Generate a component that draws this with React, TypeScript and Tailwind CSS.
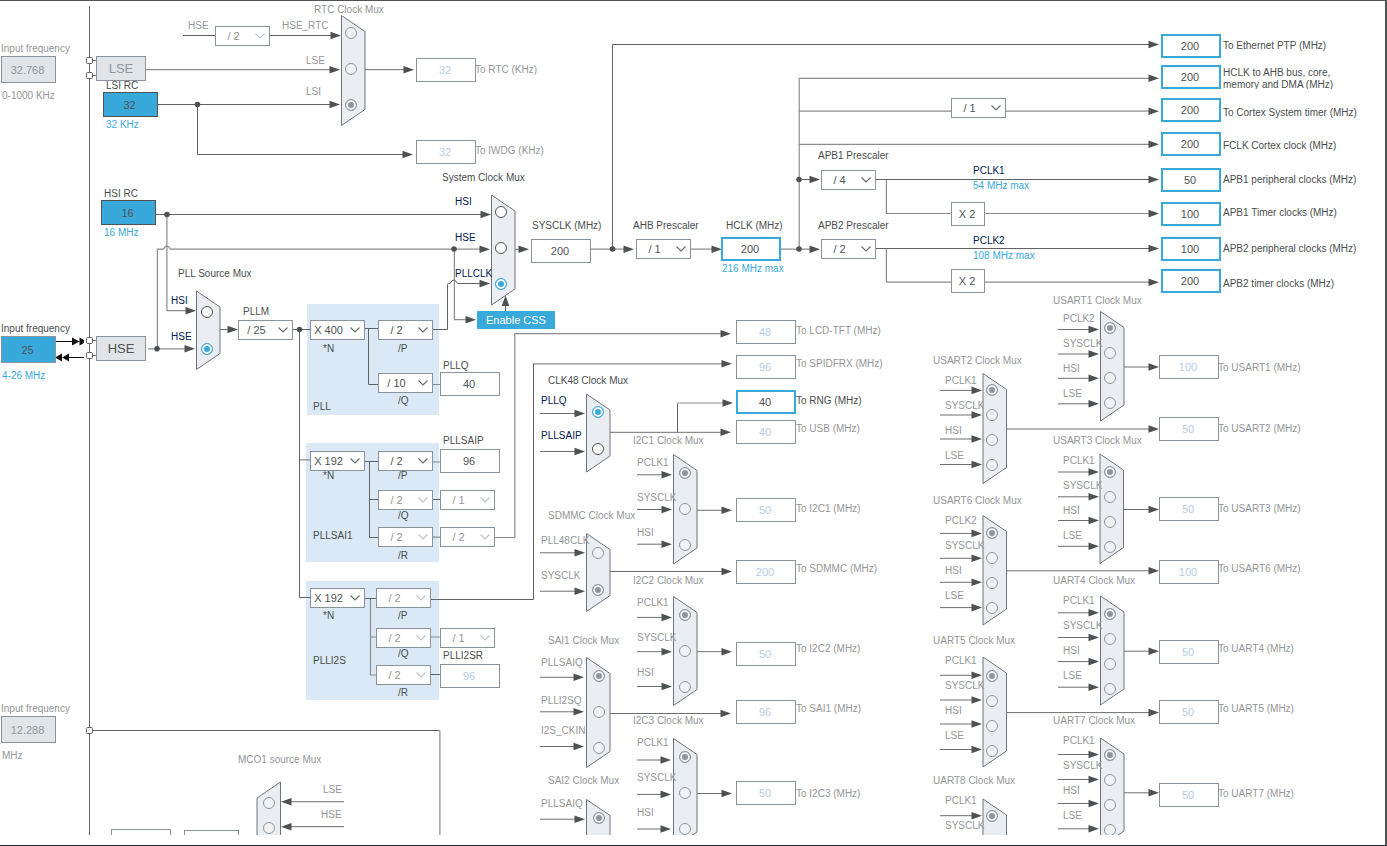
import { useId, useState } from "react";
import clsx from "clsx";

type Tone = "on" | "off" | "navy" | "blue";

const tones: Record<Tone, string> = {
  on: "text-[#4a4d4e]",
  off: "text-[#949697]",
  navy: "text-[#002052]",
  blue: "text-[#39a9dc]",
};

// label, label x, label y, radio y, wire y
type MuxInput = [string, number, number, number, number?];

type MuxData = {
  title: string;
  titleAt: [number, number];
  x: number;
  top: number;
  bottom: number;
  radioX: number;
  picked: number;
  active?: boolean;
  flipped?: boolean;
  wire?: [number, number];
  out?: [number, number];
  inputs: MuxInput[];
};

const muxes: MuxData[] = [
  {
    title: "RTC Clock Mux", titleAt: [314, 10], x: 341.5, top: 15.5, bottom: 125.5, radioX: 351, picked: 2, out: [69.7, 414],
    inputs: [["HSE_RTC", 282, 26, 33], ["LSE", 306, 61, 69], ["LSI", 306, 92, 105]],
  },
  {
    title: "System Clock Mux", titleAt: [442, 178], x: 491.5, top: 195, bottom: 305, radioX: 501, picked: 2, active: true, out: [249.3, 529],
    inputs: [["HSI", 455, 202, 212], ["HSE", 455, 238, 248], ["PLLCLK", 455, 274, 284]],
  },
  {
    title: "PLL Source Mux", titleAt: [178, 274], x: 196.5, top: 291, bottom: 369.5, radioX: 207, picked: 1, active: true, out: [329.5, 238],
    inputs: [["HSI", 171, 301, 312], ["HSE", 171, 337, 349]],
  },
  {
    title: "CLK48 Clock Mux", titleAt: [548, 381], x: 586.5, top: 394, bottom: 472, radioX: 598, picked: 0, active: true, wire: [540, 585], out: [432.3, 731],
    inputs: [["PLLQ", 541, 401, 412, 413.5], ["PLLSAIP", 541, 436, 449, 451.5]],
  },
  {
    title: "SDMMC Clock Mux", titleAt: [548, 516], x: 586.5, top: 533.5, bottom: 611.5, radioX: 598, picked: 1, wire: [540, 585], out: [571.5, 732],
    inputs: [["PLL48CLK", 541, 541, 553, 552.8], ["SYSCLK", 541, 576, 590, 591.2]],
  },
  {
    title: "SAI1 Clock Mux", titleAt: [548, 641], x: 586.5, top: 657.5, bottom: 767.5, radioX: 599, picked: 0, wire: [540, 584], out: [713.5, 731],
    inputs: [["PLLSAIQ", 541, 663, 676, 677.3], ["PLLI2SQ", 541, 701, 712, 711.8], ["I2S_CKIN", 541, 731, 748, 746.5]],
  },
  {
    title: "SAI2 Clock Mux", titleAt: [548, 781], x: 586.5, top: 799.5, bottom: 909.5, radioX: 599, picked: 0, wire: [540, 585],
    inputs: [["PLLSAIQ", 541, 804, 818, 819.2]],
  },
  {
    title: "I2C1 Clock Mux", titleAt: [633, 441], x: 673.5, top: 454.5, bottom: 564, radioX: 685, picked: 0, wire: [637, 672], out: [510.3, 732],
    inputs: [["PCLK1", 637, 463, 473, 474.8], ["SYSCLK", 637, 498, 509, 509.5], ["HSI", 637, 533, 545, 544.2]],
  },
  {
    title: "I2C2 Clock Mux", titleAt: [633, 581], x: 673.5, top: 596.5, bottom: 705.5, radioX: 685, picked: 0, wire: [637, 672], out: [651.7, 732],
    inputs: [["PCLK1", 637, 603, 615, 617.4], ["SYSCLK", 637, 638, 651, 651.7], ["HSI", 637, 673, 687, 686.5]],
  },
  {
    title: "I2C3 Clock Mux", titleAt: [633, 721], x: 673.5, top: 738.5, bottom: 848, radioX: 685, picked: 0, wire: [637, 671], out: [793.5, 732],
    inputs: [["PCLK1", 637, 743, 757, 760], ["SYSCLK", 637, 778, 793, 794.4], ["HSI", 637, 813, 829, 829]],
  },
  {
    title: "USART1 Clock Mux", titleAt: [1053, 301], x: 1100.5, top: 311.5, bottom: 421, radioX: 1110, picked: 0, wire: [1058, 1099], out: [367, 1159],
    inputs: [["PCLK2", 1063, 319, 328, 329.5], ["SYSCLK", 1063, 344, 353, 354], ["HSI", 1063, 369, 378, 378.3], ["LSE", 1063, 394, 403, 403.8]],
  },
  {
    title: "USART3 Clock Mux", titleAt: [1053, 441], x: 1100, top: 454, bottom: 563.5, radioX: 1110, picked: 0, wire: [1058, 1099], out: [509.5, 1159],
    inputs: [["PCLK1", 1063, 461, 472, 472], ["SYSCLK", 1063, 486, 497, 496.8], ["HSI", 1063, 511, 522, 520.5], ["LSE", 1063, 536, 547, 546.3]],
  },
  {
    title: "UART4 Clock Mux", titleAt: [1053, 581], x: 1100.5, top: 596, bottom: 705, radioX: 1110, picked: 0, wire: [1058, 1099], out: [651.2, 1159],
    inputs: [["PCLK1", 1063, 601, 614, 612.8], ["SYSCLK", 1063, 626, 639, 637.5], ["HSI", 1063, 651, 664, 661.6], ["LSE", 1063, 676, 689, 687.2]],
  },
  {
    title: "UART7 Clock Mux", titleAt: [1053, 721], x: 1100.5, top: 738, bottom: 847, radioX: 1110, picked: 0, wire: [1058, 1099], out: [792.8, 1159],
    inputs: [["PCLK1", 1063, 741, 755, 754.5], ["SYSCLK", 1063, 766, 780, 779.5], ["HSI", 1063, 791, 805, 803.5], ["LSE", 1063, 816, 830, 828.8]],
  },
  {
    title: "USART2 Clock Mux", titleAt: [933, 361], x: 983, top: 373.5, bottom: 483.5, radioX: 992, picked: 0, wire: [940, 982], out: [429, 1159],
    inputs: [["PCLK1", 945, 381, 390, 390.4], ["SYSCLK", 945, 406, 415, 415], ["HSI", 945, 431, 440, 439], ["LSE", 945, 456, 465, 464.5]],
  },
  {
    title: "USART6 Clock Mux", titleAt: [933, 501], x: 983, top: 515.5, bottom: 625, radioX: 992, picked: 0, wire: [940, 982], out: [570.8, 1159],
    inputs: [["PCLK2", 945, 521, 533, 533.4], ["SYSCLK", 945, 546, 558, 558.3], ["HSI", 945, 571, 583, 582.3], ["LSE", 945, 596, 608, 607.6]],
  },
  {
    title: "UART5 Clock Mux", titleAt: [933, 641], x: 983, top: 657, bottom: 767, radioX: 992, picked: 0, wire: [940, 982], out: [712.6, 1159],
    inputs: [["PCLK1", 945, 661, 676, 675.3], ["SYSCLK", 945, 686, 701, 700], ["HSI", 945, 711, 726, 724], ["LSE", 945, 736, 751, 749.5]],
  },
  {
    title: "UART8 Clock Mux", titleAt: [933, 781], x: 983, top: 799, bottom: 909, radioX: 992, picked: 0, wire: [940, 982],
    inputs: [["PCLK1", 945, 801, 816, 815.7], ["SYSCLK", 945, 826, 841, 841]],
  },
  {
    title: "MCO1 source Mux", titleAt: [238, 760], x: 257, top: 782, bottom: 912, radioX: 269, picked: -1, flipped: true,
    inputs: [["LSE", 323, 790, 803], ["HSE", 321, 815, 828]],
  },
];

// value, x, y, label, label x, label y, state
type BoxData = [string, number, number, string, number, number, "plain" | "live" | "off"];

const boxes: BoxData[] = [
  ["32", 416, 58, "To RTC (KHz)", 475, 70, "off"],
  ["32", 416, 140, "To IWDG (KHz)", 475, 151, "off"],
  ["200", 531, 239, "SYSCLK (MHz)", 532, 226, "plain"],
  ["200", 721, 237, "HCLK (MHz)", 726, 226, "live"],
  ["40", 440, 372, "PLLQ", 443, 366, "plain"],
  ["96", 440, 449, "PLLSAIP", 443, 441, "plain"],
  ["96", 440, 664, "PLLI2SR", 443, 656, "off"],
  ["200", 1161, 34, "To Ethernet PTP (MHz)", 1223, 46, "live"],
  ["200", 1161, 65, "HCLK to AHB bus, core, memory and DMA (MHz)", 1223, 73, "live"],
  ["200", 1161, 98, "To Cortex System timer (MHz)", 1223, 113, "live"],
  ["200", 1161, 132, "FCLK Cortex clock (MHz)", 1223, 146, "live"],
  ["50", 1161, 168, "APB1 peripheral clocks (MHz)", 1223, 180, "live"],
  ["100", 1161, 202, "APB1 Timer clocks (MHz)", 1223, 213, "live"],
  ["100", 1161, 237, "APB2 peripheral clocks (MHz)", 1223, 249, "live"],
  ["200", 1161, 269, "APB2 timer clocks (MHz)", 1223, 284, "live"],
  ["48", 736, 320, "To LCD-TFT (MHz)", 796, 331, "off"],
  ["96", 736, 355, "To SPIDFRX (MHz)", 796, 364, "off"],
  ["40", 736, 390, "To RNG (MHz)", 796, 401, "live"],
  ["40", 736, 420, "To USB (MHz)", 796, 429, "off"],
  ["50", 736, 498, "To I2C1 (MHz)", 796, 509, "off"],
  ["200", 736, 560, "To SDMMC (MHz)", 796, 569, "off"],
  ["50", 736, 642, "To I2C2 (MHz)", 796, 649, "off"],
  ["96", 736, 700, "To SAI1 (MHz)", 796, 709, "off"],
  ["50", 736, 781, "To I2C3 (MHz)", 796, 794, "off"],
  ["100", 1159, 355, "To USART1 (MHz)", 1218, 368, "off"],
  ["50", 1159, 417, "To USART2 (MHz)", 1218, 429, "off"],
  ["50", 1159, 497, "To USART3 (MHz)", 1218, 509, "off"],
  ["100", 1159, 560, "To USART6 (MHz)", 1218, 569, "off"],
  ["50", 1159, 640, "To UART4 (MHz)", 1218, 649, "off"],
  ["50", 1159, 700, "To UART5 (MHz)", 1218, 709, "off"],
  ["50", 1159, 783, "To UART7 (MHz)", 1218, 794, "off"],
];

// name, value, x, y, disabled
const dividers: [string, string, number, number, boolean?][] = [
  ["RTC HSE divider", "/ 2", 215, 26, true],
  ["Cortex timer prescaler", "/ 1", 951, 98],
  ["AHB Prescaler", "/ 1", 636, 239],
  ["APB1 Prescaler", "/ 4", 821, 170],
  ["APB2 Prescaler", "/ 2", 821, 239],
  ["PLLM", "/ 25", 238, 320],
  ["PLL N", "X 400", 310, 320],
  ["PLL P", "/ 2", 378, 320],
  ["PLL Q", "/ 10", 378, 373],
  ["PLLSAI1 N", "X 192", 310, 451],
  ["PLLSAI1 P", "/ 2", 378, 451],
  ["PLLSAI1 Q", "/ 2", 378, 490, true],
  ["PLLSAI1 Q divider", "/ 1", 440, 490, true],
  ["PLLSAI1 R", "/ 2", 378, 527, true],
  ["PLLSAI1 R divider", "/ 2", 440, 527, true],
  ["PLLI2S N", "X 192", 310, 588],
  ["PLLI2S P", "/ 2", 376, 588, true],
  ["PLLI2S Q", "/ 2", 376, 628, true],
  ["PLLI2S Q divider", "/ 1", 440, 628, true],
  ["PLLI2S R", "/ 2", 376, 665, true],
  ["MCO1 prescaler", "/ 1", 184, 830, true],
];

const notes: [string, number, number, Tone][] = [
  ["HSE", 188, 26, "off"],
  ["216 MHz max", 722, 269, "blue"],
  ["54 MHz max", 973, 186, "blue"],
  ["108 MHz max", 973, 256, "blue"],
  ["PCLK1", 973, 171, "navy"],
  ["PCLK2", 973, 241, "navy"],
  ["PLLM", 243, 312, "on"],
  ["AHB Prescaler", 633, 226, "on"],
  ["APB1 Prescaler", 818, 156, "on"],
  ["APB2 Prescaler", 818, 226, "on"],
  ["*N", 323, 349, "on"],
  ["/P", 398, 349, "on"],
  ["/Q", 398, 401, "on"],
  ["PLL", 313, 407, "on"],
  ["*N", 323, 476, "on"],
  ["/P", 398, 476, "on"],
  ["/Q", 398, 516, "on"],
  ["/R", 398, 556, "on"],
  ["PLLSAI1", 313, 536, "on"],
  ["*N", 323, 616, "on"],
  ["/P", 398, 616, "on"],
  ["/Q", 398, 654, "on"],
  ["/R", 398, 693, "on"],
  ["PLLI2S", 313, 661, "on"],
];

const darkWires = [
  "M89.5 6V835",
  "M183 35.5H215M270 35.5H331",
  "M158 104.5H331M197.5 104.5V154.5H404",
  "M156 214.5H482",
  "M433 329.5H447.5V284.5Q447.5 283.5 448.5 283.5H450Q454 276.5 457.5 283.5H482",
  "M612.5 249V44.5H1150",
  "M799 179.5H812M876 179.5H1150",
  "M876 248.5H1150",
  "M293 329.5H310M299.5 329V597.5H310",
  "M364 328.5H378M368.5 328.5V384.5H378",
  "M364 461.5H378M369.5 461.5V537.5H378M369.5 499.5H378M433 499.5H440",
  "M431 599.5H533.5V363.5",
  "M364 598.5H376M431 674.5H440",
  "M677.5 432V403.5",
  "M93 60.5H97M93 75.5H97M93 340.5H97M93 355.5H97",
  "M93 730.5H439.5",
  "M505.5 305V311",
  "M344 826.7H290",
];

const softWires = [
  "M146 69.7H331",
  "M166.9 214V310.7H188",
  "M148 348.8H188M157.4 348.8V249.2H163.5Q166.9 242.5 170.5 249.2H482",
  "M454.4 249V319.7H467",
  "M591 249.2H628M691 249.2H714M781 249.2H812",
  "M799.2 249V78.3H1150M799.2 111.2H951M1006 111.2H1150M799.2 144.3H1150",
  "M886.4 179V213.5H951M985 213.5H1150M886.4 248.5V282.2H951M985 282.2H1150",
  "M433 384.5H440M433 462H440M433 537.2H440M299.5 459.8H310",
  "M495 537.5H514.8V333.7H722",
  "M370.5 598.5V675H376M370.5 637H376M431 637H440",
  "M533.5 363.8H723M677.5 403H725",
  "M439.9 730.5V835",
  "M344 801.7H290",
];

const arrowTips = [
  [341, 35.5], [340, 69.8], [340, 104.5], [413, 154.5], [491, 214.5], [490, 249.2], [490, 283.6], [196, 310.7],
  [195, 348.8], [476, 319.7], [634, 249.2], [722, 249.2], [820, 249.2], [820, 179.5], [731, 333.7], [732, 363.8],
  [733, 403], [1159, 44.5], [1159, 78.3], [1159, 111.2], [1159, 144.3], [1159, 179.5], [1159, 213.6], [1159, 248.5], [1159, 282.2],
];

const dots = [
  [197.5, 104.5], [167, 214.5], [157, 348.8], [454, 249], [612.5, 249], [799, 249], [799, 179.5], [299.5, 329.5],
];

const pins = [60.5, 75.5, 340.5, 355.5, 730.5];

const pllGroups = [
  { x: 307, y: 304, w: 132, h: 111 },
  { x: 306, y: 443, w: 133, h: 119 },
  { x: 306, y: 581, w: 133, h: 119 },
];

function Arrow({ x, y }: { x: number; y: number }) {
  return <path d={`M${x} ${y}l-10.5 -3.8v7.6z`} fill="#4e5152" />;
}

function Wires() {
  return (
    <svg className="pointer-events-none absolute inset-0 h-full w-full" fill="none" aria-hidden="true">
      {pllGroups.map((g) => (
        <rect key={g.y} x={g.x} y={g.y} width={g.w} height={g.h} fill="#dae9f5" />
      ))}
      <path d={softWires.join("")} stroke="#8a8c8d" strokeWidth="1.2" />
      <path d={darkWires.join("")} stroke="#606364" />

      {muxes.map((m) => {
        const right = m.x + 23.5;
        const body = m.flipped
          ? `M${right} ${m.top}V${m.bottom}L${m.x} ${m.bottom - 16}V${m.top + 16}Z`
          : `M${m.x} ${m.top}L${right} ${m.top + 16}V${m.bottom - 16}L${m.x} ${m.bottom}Z`;
        return (
          <g key={m.title}>
            {m.wire &&
              m.inputs.map(([, , , radioY, y = radioY]) => (
                <g key={y}>
                  <path d={`M${m.wire![0]} ${y}H${m.wire![1] - 8}`} stroke="#6c6f70" />
                  <Arrow x={m.wire![1]} y={y} />
                </g>
              ))}
            {m.out && (
              <>
                <path d={`M${right} ${m.out[0]}H${m.out[1] - 8}`} stroke="#6c6f70" />
                <Arrow x={m.out[1]} y={m.out[0]} />
              </>
            )}
            <path d={body} fill="#eaeef2" stroke="#6d757b" />
          </g>
        );
      })}

      {arrowTips.map(([x, y]) => (
        <Arrow key={`${x}-${y}`} x={x} y={y} />
      ))}
      {dots.map(([x, y]) => (
        <circle key={`${x}-${y}`} cx={x} cy={y} r="2.8" fill="#4e5152" />
      ))}
      <path d="M505.5 295.5l-3.8 10.5h7.6zM281 801.7l10.5 -3.8v7.6zM281 826.7l10.5 -3.8v7.6z" fill="#4e5152" />

      {pins.map((y) => (
        <rect key={y} x="86.5" y={y - 3} width="6" height="6" rx="1" fill="#fff" stroke="#606364" />
      ))}

      {/* external oscillator in and out */}
      <path d="M56 341.5H73M69 357.5H84" stroke="#111" />
      <path d="M79.5 341.5l-7.5 -4v8zM79.5 337.5l4.5 2.5v3l-4.5 2.5zM62 357.5l7 -4v8zM55 357.5l7 -4v8z" fill="#111" />
    </svg>
  );
}

function Mux({ data }: { data: MuxData }) {
  const id = useId();
  const [picked, setPicked] = useState(data.picked);
  const [tx, ty] = data.titleAt;

  return (
    <fieldset disabled={!data.active}>
      <legend
        className={clsx("absolute whitespace-nowrap", tones[data.active ? "on" : "off"])}
        style={{ left: tx, top: ty - 6 }}
      >
        {data.title}
      </legend>
      {data.inputs.map(([label, lx, ly, ry], i) => (
        <div key={label}>
          <label
            htmlFor={`${id}-${i}`}
            className={clsx("absolute", tones[data.active ? "navy" : "off"])}
            style={{ left: lx, top: ly - 6 }}
          >
            {label}
          </label>
          <input
            id={`${id}-${i}`}
            type="radio"
            name={id}
            checked={picked === i}
            onChange={() => setPicked(i)}
            className="absolute size-3 appearance-none rounded-full border border-[#505354] bg-white checked:border-[#39a9dc] checked:bg-[#39a9dc] checked:shadow-[inset_0_0_0_2px_white] disabled:border-[#8f969b] disabled:bg-[#f0f2f4] disabled:checked:bg-[#8f969b] disabled:checked:shadow-[inset_0_0_0_2px_#f0f2f4]"
            style={{ left: data.radioX - 6, top: ry - 6 }}
          />
        </div>
      ))}
    </fieldset>
  );
}

function Box({ data }: { data: BoxData }) {
  const id = useId();
  const [value, x, y, label, lx, ly, state] = data;

  return (
    <div>
      <input
        id={id}
        type="text"
        defaultValue={value}
        disabled={state === "off"}
        className={clsx(
          "absolute h-6 w-15 bg-white pr-0.5 text-center text-[11px]",
          state === "live" && "border-2 border-[#39a9dc] text-[#505354]",
          state === "plain" && "border border-[#8a9399] text-[#505354]",
          state === "off" && "border border-[#8a9399] text-[#b5cde4]",
        )}
        style={{ left: x, top: y }}
      />
      <label
        htmlFor={id}
        className={clsx(
          "absolute",
          label.length > 30 ? "h-[22px] w-32 overflow-hidden" : "whitespace-nowrap",
          tones[state === "off" && !label.startsWith("PLL") ? "off" : "on"],
        )}
        style={{ left: lx, top: ly - 6 }}
      >
        {label}
      </label>
    </div>
  );
}

function Divider({ name, value, x, y, disabled }: { name: string; value: string; x: number; y: number; disabled?: boolean }) {
  return (
    <div className="absolute h-5 w-[55px]" style={{ left: x, top: y }}>
      <select
        aria-label={name}
        disabled={disabled}
        className="h-full w-full appearance-none border border-[#8a9399] bg-white pr-[18px] text-center text-[11px] text-[#505354] disabled:text-[#949697] disabled:opacity-100"
      >
        <option>{value}</option>
      </select>
      <svg className="pointer-events-none absolute top-[7px] right-[5px] h-[6px] w-[10px]" viewBox="0 0 10 6" fill="none">
        <path d="M0.5 0.5L5 5L9.5 0.5" stroke={disabled ? "#bfc3c6" : "#6a6e70"} strokeWidth="1.2" />
      </svg>
    </div>
  );
}

function InputFrequency({ value, range, y, live }: { value: string; range: string; y: number; live?: boolean }) {
  const id = useId();
  return (
    <div className="absolute left-px flex flex-col gap-px whitespace-nowrap" style={{ top: y }}>
      <label htmlFor={id} className={tones[live ? "on" : "off"]}>
        Input frequency
      </label>
      <input
        id={id}
        type="text"
        defaultValue={value}
        disabled={!live}
        className={clsx(
          "h-[27px] w-[55px] border border-[#8a9399] pr-0.5 text-center text-[11px]",
          live ? "bg-[#39a9dc] text-[#505354]" : "bg-[#e1e5e8] text-[#8f9599]",
        )}
      />
      <span className={clsx("pt-1.5 pl-px", tones[live ? "blue" : "off"])}>{range}</span>
    </div>
  );
}

function RcSource({ label, value, unit, x, y }: { label: string; value: string; unit: string; x: number; y: number }) {
  const id = useId();
  return (
    <div className="absolute flex flex-col whitespace-nowrap" style={{ left: x, top: y }}>
      <label htmlFor={id} className={clsx("pl-[3px]", tones.on)}>
        {label}
      </label>
      <input
        id={id}
        type="text"
        readOnly
        value={value}
        className="h-[25px] w-[55px] border border-[#505354] bg-[#39a9dc] pr-0.5 text-center text-[11px] text-[#505354]"
      />
      <span className={clsx("pt-0.5 pl-[3px]", tones.blue)}>{unit}</span>
    </div>
  );
}

export default function App() {
  return (
    <main className="relative flex h-screen flex-col bg-white font-['Liberation_Sans',Arial,sans-serif] text-[10px] leading-3">
      <section className="relative mb-[11px] min-h-0 flex-1 overflow-hidden">
        <Wires />

        <InputFrequency value="32.768" range="0-1000 KHz" y={43} />
        <InputFrequency value="25" range="4-26 MHz" y={323} live />
        <InputFrequency value="12.288" range="MHz" y={703} />

        <button
          type="button"
          disabled
          className="absolute top-14 left-24 h-[25px] w-[50px] border border-[#8a9399] bg-[#e1e5e8] text-[13px] text-[#8f9599]"
        >
          LSE
        </button>
        <button
          type="button"
          className="absolute top-84 left-24 h-[25px] w-[50px] border border-[#8a9399] bg-[#e1e5e8] text-[13px] text-[#505354]"
        >
          HSE
        </button>
        <RcSource label="LSI RC" value="32" unit="32 KHz" x={103} y={80} />
        <RcSource label="HSI RC" value="16" unit="16 MHz" x={101} y={188} />

        {muxes.map((m) => (
          <Mux key={m.title} data={m} />
        ))}
        {dividers.map(([name, value, x, y, disabled]) => (
          <Divider key={name} name={name} value={value} x={x} y={y} disabled={disabled} />
        ))}
        {boxes.map((b) => (
          <Box key={b[3]} data={b} />
        ))}

        {/* fixed timer multipliers */}
        {[202, 269].map((y) => (
          <div
            key={y}
            className="absolute flex h-6 w-[34px] items-center justify-center border border-[#8a9399] bg-white pr-0.5 text-[11px] text-[#505354]"
            style={{ left: 951, top: y }}
          >
            X 2
          </div>
        ))}
        <div className="absolute h-6 w-15 border border-[#8a9399] bg-white" style={{ left: 111, top: 829 }} />

        <button
          type="button"
          className="absolute h-[18px] w-[78px] bg-[#39a9dc] text-[11px] text-white"
          style={{ left: 477, top: 311 }}
        >
          Enable CSS
        </button>

        {notes.map(([text, x, y, tone]) => (
          <span key={`${x}-${y}`} className={clsx("absolute whitespace-nowrap", tones[tone])} style={{ left: x, top: y - 6 }}>
            {text}
          </span>
        ))}
      </section>

      <div className="pointer-events-none absolute inset-0 border-t border-r-2 border-b border-t-[#505354] border-r-[#505354] border-b-[#26323e]" />
    </main>
  );
}
